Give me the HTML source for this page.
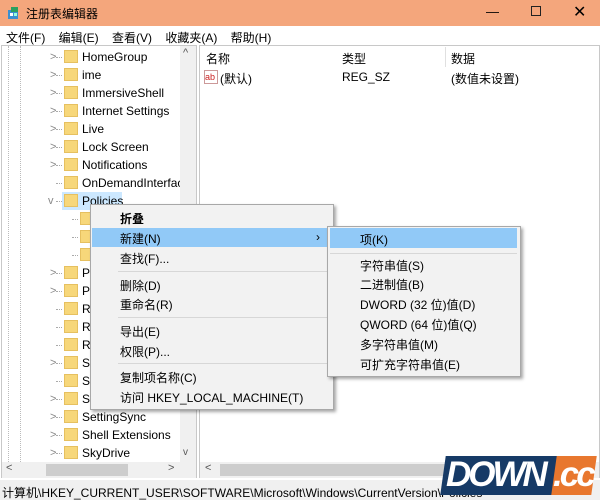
<!DOCTYPE html>
<html><head><meta charset="utf-8"><style>
*{margin:0;padding:0;box-sizing:border-box}
body{width:600px;height:500px;overflow:hidden;background:#fff;font-family:"Liberation Sans","Noto Sans CJK SC",sans-serif;font-size:12px;color:#000;position:relative}
.a{position:absolute;white-space:nowrap}
.title{left:0;top:0;width:600px;height:26px;background:#f4a67c}
.row{position:absolute;left:0;height:18px;line-height:18px}
.fold{position:absolute;width:14px;height:13px;background:#f7d77a;border:1px solid #e6c060;top:2px}
.chev{position:absolute;color:#888;font-size:11px}
.menu{background:#f2f2f2;border:1px solid #a8a8a8;box-shadow:2px 2px 3px rgba(0,0,0,.35)}
.hl{background:#91c9f7}
.sep{position:absolute;height:1px;background:#d7d7d7}
</style></head><body>
<div class="a title"></div>
<svg class="a" style="left:6px;top:5px" width="16" height="16" viewBox="0 0 16 16"><rect x="2" y="5" width="10" height="9" fill="#3a8fd0"/><rect x="5" y="2" width="7" height="5" fill="#2aa060"/><rect x="4" y="8" width="3" height="3" fill="#fff"/><rect x="8" y="8" width="3" height="3" fill="#9fd"/></svg>
<div class="a" style="left:26px;top:5px;font-size:12px">注册表编辑器</div>
<div class="a" style="left:486px;top:4px;font-size:13px">—</div>
<div class="a" style="left:531px;top:6px;width:10px;height:10px;border:1px solid #222"></div>
<div class="a" style="left:573px;top:2px;font-size:16px">✕</div>
<div class="a" style="left:6px;top:29px">文件(F)&nbsp;&nbsp;&nbsp;&nbsp;编辑(E)&nbsp;&nbsp;&nbsp;&nbsp;查看(V)&nbsp;&nbsp;&nbsp;&nbsp;收藏夹(A)&nbsp;&nbsp;&nbsp;&nbsp;帮助(H)</div>
<!-- tree pane -->
<div class="a" style="left:1px;top:45px;width:196px;height:433px;border:1px solid #c8c8c8"></div>
<div class="a" style="left:8px;top:46px;width:0;height:416px;border-left:1px dotted #bbb"></div>
<div class="a" style="left:20px;top:46px;width:0;height:416px;border-left:1px dotted #bbb"></div>
<div class="a" style="left:180px;top:46px;width:16px;height:416px;background:#f0f0f0"></div>
<div class="a" style="left:183px;top:47px;color:#555;font-size:11px">^</div>
<div class="a" style="left:183px;top:447px;color:#555;font-size:10px">v</div>
<div class="a" style="left:2px;top:462px;width:178px;height:16px;background:#f0f0f0"></div>
<div class="a" style="left:46px;top:464px;width:82px;height:12px;background:#cdcdcd"></div>
<div class="a" style="left:6px;top:462px;color:#555;font-size:11px">&lt;</div>
<div class="a" style="left:168px;top:462px;color:#555;font-size:11px">&gt;</div>
<div class="a" style="left:180px;top:462px;width:16px;height:16px;background:#f0f0f0"></div>
<div class="a" style="left:2px;top:46px;width:178px;height:416px;overflow:hidden">
<div style="position:absolute;left:60px;top:146px;width:60px;height:18px;background:#cce8ff"></div>
<div id="tree"></div>
</div>
<!-- right pane -->
<div class="a" style="left:199px;top:45px;width:401px;height:433px;border:1px solid #c8c8c8"></div>
<div class="a" style="left:206px;top:50px">名称</div>
<div class="a" style="left:342px;top:50px">类型</div>
<div class="a" style="left:445px;top:47px;height:20px;border-left:1px solid #e0e0e0"></div>
<div class="a" style="left:451px;top:50px">数据</div>
<div class="a" style="left:204px;top:70px;width:14px;height:14px;border:1px solid #c99;font-size:9px;color:#c22;line-height:12px">ab</div>
<div class="a" style="left:220px;top:70px">(默认)</div>
<div class="a" style="left:342px;top:70px">REG_SZ</div>
<div class="a" style="left:451px;top:70px">(数值未设置)</div>
<div class="a" style="left:200px;top:462px;width:399px;height:16px;background:#f0f0f0"></div>
<div class="a" style="left:220px;top:464px;width:260px;height:12px;background:#cdcdcd"></div>
<div class="a" style="left:205px;top:462px;color:#555;font-size:11px">&lt;</div>
<div class="a" style="left:0;top:480px;width:600px;height:20px;background:#f0f0f0"></div>
<div class="a" style="left:2px;top:484px">计算机\HKEY_CURRENT_USER\SOFTWARE\Microsoft\Windows\CurrentVersion\Policies</div>
<!-- context menu -->
<div class="a menu" style="left:90px;top:204px;width:244px;height:206px"></div>
<div class="a hl" style="left:92px;top:228px;width:240px;height:19px"></div>
<div class="sep" style="left:118px;top:271px;width:212px"></div>
<div class="sep" style="left:118px;top:317px;width:212px"></div>
<div class="sep" style="left:118px;top:363px;width:212px"></div>
<div class="a" style="left:120px;top:210px;font-weight:bold">折叠</div>
<div class="a" style="left:120px;top:230px">新建(N)</div>
<div class="a" style="left:316px;top:230px">›</div>
<div class="a" style="left:120px;top:250px">查找(F)...</div>
<div class="a" style="left:120px;top:277px">删除(D)</div>
<div class="a" style="left:120px;top:296px">重命名(R)</div>
<div class="a" style="left:120px;top:323px">导出(E)</div>
<div class="a" style="left:120px;top:343px">权限(P)...</div>
<div class="a" style="left:120px;top:369px">复制项名称(C)</div>
<div class="a" style="left:120px;top:389px">访问 HKEY_LOCAL_MACHINE(T)</div>
<!-- submenu -->
<div class="a menu" style="left:327px;top:226px;width:194px;height:151px"></div>
<div class="a hl" style="left:330px;top:228px;width:187px;height:20px"></div>
<div class="sep" style="left:330px;top:253px;width:187px"></div>
<div class="a" style="left:360px;top:231px">项(K)</div>
<div class="a" style="left:360px;top:257px">字符串值(S)</div>
<div class="a" style="left:360px;top:276px">二进制值(B)</div>
<div class="a" style="left:360px;top:296px">DWORD (32 位)值(D)</div>
<div class="a" style="left:360px;top:316px">QWORD (64 位)值(Q)</div>
<div class="a" style="left:360px;top:336px">多字符串值(M)</div>
<div class="a" style="left:360px;top:356px">可扩充字符串值(E)</div>
<!-- watermark -->
<div class="a" style="left:443px;top:456px;width:112px;height:39px;background:#163a66;transform:skewX(-8deg)"></div>
<div class="a" style="left:554px;top:456px;width:40px;height:39px;background:#e8772e;transform:skewX(-8deg)"></div>
<div class="a" style="left:446px;top:455px;font-size:35px;font-weight:bold;font-style:italic;color:#fff;letter-spacing:-3px;line-height:40px">DOWN</div>
<div class="a" style="left:553px;top:455px;font-size:35px;font-weight:bold;font-style:italic;color:#fff;letter-spacing:-3px;line-height:40px">.cc</div>
<script>
var items=[["HomeGroup",1],["ime",1],["ImmersiveShell",1],["Internet Settings",1],["Live",1],["Lock Screen",1],["Notifications",1],["OnDemandInterface",0],["Policies",2],["",3],["",3],["",3],["P",1],["P",1],["R",0],["R",0],["R",0],["S",1],["S",0],["S",1],["SettingSync",1],["Shell Extensions",1],["SkyDrive",1]];
var h="";items.forEach(function(it,i){var y=2+i*18;var fx=it[1]==3?78:62;
h+='<div class="row" style="top:'+y+'px;width:178px">';
if(it[1]==1)h+='<span class="chev" style="left:48px;top:0">&gt;</span>';
if(it[1]==2)h+='<span class="chev" style="left:46px;top:0">v</span>';
h+='<span style="position:absolute;left:'+(fx-8)+'px;top:9px;width:6px;border-top:1px dotted #aaa"></span>';
h+='<span class="fold" style="left:'+fx+'px"></span>';
if(it[0])h+='<span style="position:absolute;left:80px;top:0">'+it[0]+'</span>';
h+='</div>';});
document.getElementById("tree").innerHTML=h;
</script>
</body></html>
